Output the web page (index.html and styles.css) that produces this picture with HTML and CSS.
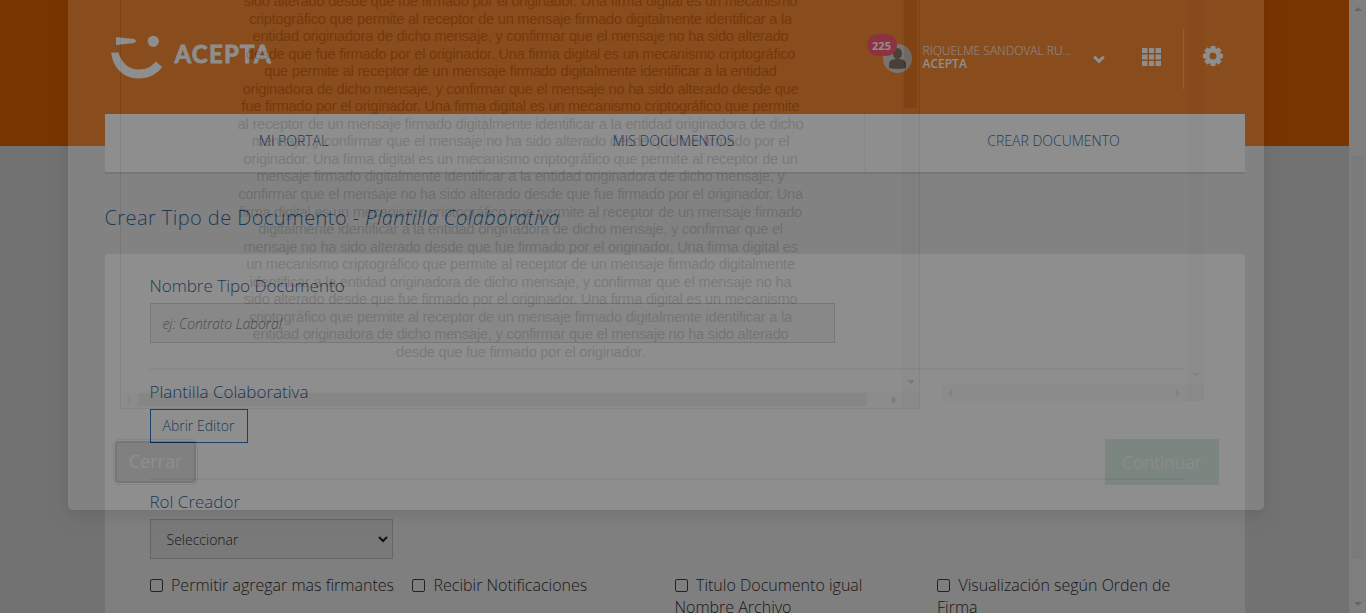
FILE: index.html
```html
<!DOCTYPE html>
<html lang="es">
<head>
<meta charset="utf-8">
<title>Crear Tipo de Documento</title>
<link rel="stylesheet" href="styles.css">
</head>
<body>
<div class="page">
  <header class="header">
    <div class="topbar">
      <div class="brand">
        <svg class="brand-face" width="54" height="44" viewBox="0 0 54 44" fill="#fff"><path d="M5 2 23 4q4 2 0 4L5 10z"/><circle cx="42.300" cy="6.300" r="5.600"/><path d="M.2 17.500h7.200C10.700 28 17.700 34.500 27.700 34.500c8 0 13-3 17-8l6.500 5.500C46.200 39 37.700 43.500 27.700 43.500 11.700 43.500 1.700 32 .2 17.500z"/></svg>
        <span class="brand-name">ACEPTA</span>
      </div>
      <div class="user">
        <div class="avatar">
          <svg width="29" height="29" viewBox="0 0 29 29"><circle cx="14.500" cy="14.500" r="14.500" fill="#d3c5b7"/><ellipse cx="14.500" cy="9.500" rx="4.500" ry="5.500" fill="#62513f"/><path d="M6 24v-4c0-4 4-5 8.500-5s8.500 1 8.500 5v4q-8.500 2-17 0z" fill="#62513f"/></svg>
          <span class="badge">225</span>
        </div>
        <div class="user-name"><span>RIQUELME SANDOVAL RU...</span><strong>ACEPTA</strong></div>
        <svg class="chevron" width="12" height="9" viewBox="0 0 12 9" fill="none" stroke="#fff" stroke-width="3"><path d="m1.200 1.700 4.800 4.600 4.800-4.600"/></svg>
        <svg class="grid" width="19" height="18" viewBox="0 0 19 18" fill="#fff"><path d="M0 0h5.500v5H0zM7 0h5v5H7zM13.500 0H19v5h-5.500zM0 6.500h5.500v5H0zM7 6.500h5v5H7zM13.500 6.500H19v5h-5.500zM0 13h5.500v5H0zM7 13h5v5H7zM13.500 13H19v5h-5.500z"/></svg>
        <div class="settings"><svg width="20" height="20" viewBox="0 0 20 20"><g fill="#fff"><path id="t" d="M7.700 0h4.600l.5 4h-5.600zM7.700 20h4.600l.5-4h-5.600z"/><use href="#t" transform="rotate(45 10 10)"/><use href="#t" transform="rotate(90 10 10)"/><use href="#t" transform="rotate(135 10 10)"/></g><circle cx="10" cy="10" r="5.700" fill="none" stroke="#fff" stroke-width="4.400"/></svg></div>
      </div>
    </div>
  </header>
  <nav class="nav"><a>MI PORTAL</a><a>MIS DOCUMENTOS</a><a>CREAR DOCUMENTO</a></nav>
  <main class="main">
    <h1 class="title">Crear Tipo de Documento - <em>Plantilla Colaborativa</em></h1>
    <section class="card">
      <label class="label">Nombre Tipo Documento</label>
      <div class="input">ej: Contrato Laboral</div>
      <div class="rule rule-first"></div>
      <label class="label">Plantilla Colaborativa</label>
      <div class="open-button">Abrir Editor</div>
      <div class="rule rule-second"></div>
      <label class="label">Rol Creador</label>
      <div class="select"><span>Seleccionar</span><svg width="10" height="7" viewBox="0 0 10 7" fill="none" stroke="#222" stroke-width="2"><path d="m1 1 4 4 4-4"/></svg></div>
      <div class="checks">
        <div><i class="box"></i>Permitir agregar mas firmantes</div>
        <div><i class="box"></i>Recibir Notificaciones</div>
        <div><i class="box"></i>Titulo Documento igual Nombre Archivo</div>
        <div><i class="box"></i>Visualización según Orden de Firma</div>
      </div>
    </section>
  </main>
</div>
<div class="window-scroll"><i class="up"></i><div class="window-thumb"></div><i class="down"></i></div>
<div class="backdrop"></div>
<div class="modal">
  <div class="viewers">
    <div class="viewer">
      <div class="viewer-body">
        <div class="document">
          <p>sido alterado desde que fue firmado por el originador. Una firma digital es un mecanismo</p>
          <p>criptográfico que permite al receptor de un mensaje firmado digitalmente identificar a la</p>
          <p>entidad originadora de dicho mensaje, y confirmar que el mensaje no ha sido alterado</p>
          <p>desde que fue firmado por el originador. Una firma digital es un mecanismo criptográfico</p>
          <p>que permite al receptor de un mensaje firmado digitalmente identificar a la entidad</p>
          <p>originadora de dicho mensaje, y confirmar que el mensaje no ha sido alterado desde que</p>
          <p>fue firmado por el originador. Una firma digital es un mecanismo criptográfico que permite</p>
          <p>al receptor de un mensaje firmado digitalmente identificar a la entidad originadora de dicho</p>
          <p>mensaje, y confirmar que el mensaje no ha sido alterado desde que fue firmado por el</p>
          <p>originador. Una firma digital es un mecanismo criptográfico que permite al receptor de un</p>
          <p>mensaje firmado digitalmente identificar a la entidad originadora de dicho mensaje, y</p>
          <p>confirmar que el mensaje no ha sido alterado desde que fue firmado por el originador. Una</p>
          <p>firma digital es un mecanismo criptográfico que permite al receptor de un mensaje firmado</p>
          <p>digitalmente identificar a la entidad originadora de dicho mensaje, y confirmar que el</p>
          <p>mensaje no ha sido alterado desde que fue firmado por el originador. Una firma digital es</p>
          <p>un mecanismo criptográfico que permite al receptor de un mensaje firmado digitalmente</p>
          <p>identificar a la entidad originadora de dicho mensaje, y confirmar que el mensaje no ha</p>
          <p>sido alterado desde que fue firmado por el originador. Una firma digital es un mecanismo</p>
          <p>criptográfico que permite al receptor de un mensaje firmado digitalmente identificar a la</p>
          <p>entidad originadora de dicho mensaje, y confirmar que el mensaje no ha sido alterado</p>
          <p>desde que fue firmado por el originador.</p>
        </div>
        <div class="vscroll"><div class="vthumb"></div><i class="down"></i></div>
      </div>
      <div class="hscroll"><i class="left"></i><div class="hthumb"></div><i class="right"></i><div class="corner"></div></div>
    </div>
    <div class="preview">
      <div class="preview-body"><div class="vscroll"><i class="down faint"></i></div></div>
      <div class="hscroll"><i class="left faint"></i><i class="right faint"></i><div class="corner"></div></div>
    </div>
  </div>
  <div class="actions"><div class="close">Cerrar</div><div class="continue">Continuar</div></div>
</div>
</body>
</html>
```
FILE: styles.css
```css
* { box-sizing: border-box; }
body { margin: 0; height: 613px; overflow: hidden; position: relative; display: flex; font-family: "Open Sans", sans-serif; font-weight: 300; background: #e5e5e5; }
.page { width: 1349px; height: 613px; overflow: hidden; }
.header { height: 146px; background: #f36a00; }
.topbar { width: 1140px; height: 114px; margin: 0 auto; display: flex; justify-content: space-between; }
.brand { display: flex; padding: 35px 0 0 6px; }
.brand-name { margin: 0 0 0 10px; font: 700 24px/37px Lato, sans-serif; letter-spacing: 1.2px; color: #fff; -webkit-text-stroke: .8px #fff; }
.user { display: flex; align-items: flex-start; color: #fff; width: 362px; }
.avatar { position: relative; margin-top: 44px; width: 29px; height: 29px; }
.badge { position: absolute; left: -16px; top: -10px; width: 30px; height: 22px; border-radius: 11px; background: #fc2f50; font-size: 11px; line-height: 23px; font-weight: 700; text-align: center; }
.user-name { display: flex; flex-direction: column; width: 159px; margin: 44px 0 0 11px; font-size: 12px; line-height: 13px; white-space: nowrap; }
.user-name strong { font-weight: 600; }
.chevron { margin: 55px 0 0 11px; }
.grid { margin: 48px 0 0 37px; }
.settings { height: 60px; margin: 29px 0 0 22px; padding: 17px 0 0 19px; border-left: 1px solid #f99a50; }
.nav { width: 1140px; height: 58px; margin: -32px auto 0; background: #fff; display: grid; grid-template-columns: repeat(3, 1fr); box-shadow: 0 2px 0 #c8c8c8; }
.nav a { padding-right: 1px; text-align: center; font-size: 14px; line-height: 54px; color: #004a98; border-right: 1px solid #f0f0f0; }
.nav a:last-child { border-right-color: transparent; }
.main { width: 1140px; margin: 0 auto; }
.title { margin: 31px 0 22px; height: 29px; line-height: 29px; font-size: 20px; font-weight: 300; letter-spacing: .43px; color: #00427c; }
.card { height: 370px; padding: 20px 60px 0 45px; background: #fff; border-radius: 4px; }
.label { display: block; height: 24px; line-height: 24px; font-size: 17px; color: #00427c; }
.input { width: 685px; height: 40px; margin-top: 5px; padding: 0 12px; border: 1px solid #ccc; background: #f3f3f3; color: #666; font-size: 14px; line-height: 39px; letter-spacing: -.1px; font-style: italic; }
.rule { height: 2px; background: #f1f1f1; }
.rule-first { margin: 25px 0 10px; }
.open-button { width: 98px; height: 34px; margin-top: 5px; border: 1px solid #004ea8; text-align: center; font-size: 14px; line-height: 32px; color: #00427c; }
.rule-second { margin: 35px 0 10px; }
.select { width: 243px; height: 40px; margin-top: 5px; padding: 0 4px 0 16px; display: flex; align-items: center; justify-content: space-between; border: 1px solid #ccc; background: #f3f3f3; font-size: 14px; color: #333; }
.checks { display: grid; grid-template-columns: 262.500px 262.500px 262.500px 250px; margin-top: 15px; font-size: 16px; line-height: 22px; color: #333; }
.checks div { padding-right: 12px; }
.box { display: inline-block; width: 13px; height: 13px; margin-right: 8.500px; border: 1px solid #444; border-radius: 2px; vertical-align: -1px; }
.window-scroll { width: 17px; height: 613px; padding: 9px 0 7px; display: flex; flex-direction: column; align-items: center; background: #fff; }
.window-thumb { width: 13px; height: 403px; margin: 145px 0 43px; background: #f4f4f4; }
.up, .down, .left, .right { border: 4px solid transparent; width: 0; height: 0; }
.up { border-top: 0; border-bottom-color: #ccc; }
.down { border-bottom: 0; border-top-color: #555; }
.window-scroll .down { border-top-color: #ccc; }
.left { border-left: 0; border-right-color: #bbb; }
.right { border-right: 0; border-left-color: #555; }
.window-scroll .up { flex: none; margin-top: -2px; }
.backdrop { position: absolute; inset: 0; background: rgba(0, 0, 0, .5); }
.modal { position: absolute; left: 68px; top: -30px; width: 1196px; height: 540px; padding: 30px 45px 0 52px; border-radius: 5px; background: #fff; opacity: .115; box-shadow: 0 5px 15px rgba(0, 0, 0, .8); }
.viewers { display: flex; align-items: flex-start; gap: 23px; }
.viewer { width: 800px; height: 409px; border: solid #aaa; border-width: 0 1px 1px; }
.viewer-body { height: 391px; display: flex; }
.document { width: 782px; height: 391px; padding-left: 18px; overflow: hidden; color: #555; font: 14.667px/17.550px "Liberation Sans", sans-serif; letter-spacing: -.255px; text-align: center; }
.document p { margin: 0; white-space: nowrap; }
.document p:first-child { margin-top: -7px; }
.vscroll { width: 17px; height: 100%; background: #f0f0f0; display: flex; flex-direction: column; align-items: center; padding-bottom: 7px; }
.vscroll .down { margin-top: auto; }
.vthumb { width: 13px; height: 108px; background: #aaa; }
.hscroll { height: 17px; display: flex; align-items: center; background: #f0f0f0; padding-left: 5px; }
.hthumb { width: 729px; height: 13px; margin: 0 25px 0 8px; background: #c1c1c1; }
.viewer .hscroll .corner { margin-left: auto; }
.corner { width: 17px; height: 17px; background: #dcdcdc; }
.preview { width: 261px; height: 401px; }
.preview-body { height: 384px; display: flex; justify-content: flex-end; }
.preview .hscroll { background: #e8e8e8; }
.preview .hscroll .right { margin-left: 224px; margin-right: 7px; }
.vscroll .down.faint { border-top-color: #999; }
.right.faint { border-left-color: #999; }
.left.faint { border-right-color: #999; }
.actions { display: flex; justify-content: space-between; margin: 30px 0 0 -7px; }
.close { width: 81px; height: 42px; margin: 2px 0 0 2px; font-size: 18px; font-weight: 400; text-align: center; line-height: 37px; color: #fff; background: #8a8a8a; border: 2px solid #333; border-radius: 4px; outline: 1px solid #aaa; outline-offset: 1px; }
.continue { width: 114px; height: 46px; font-size: 18px; font-weight: 300; text-align: center; line-height: 46px; color: #fff; background: #62c296; }
```
